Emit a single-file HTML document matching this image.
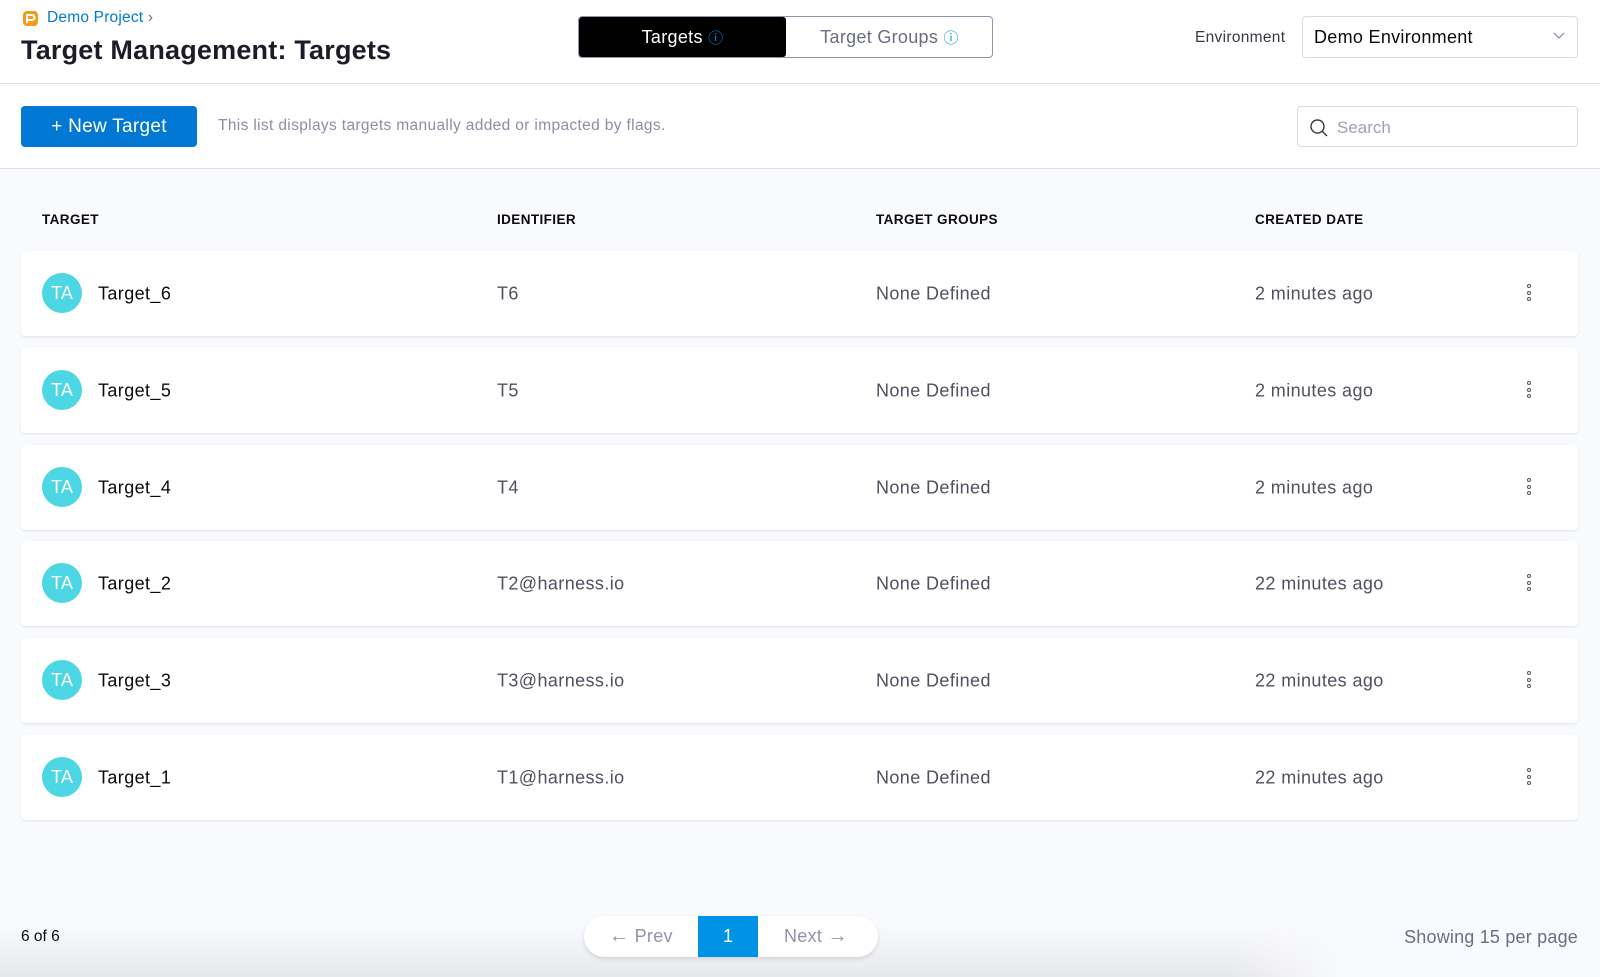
<!DOCTYPE html>
<html><head><meta charset="utf-8"><style>
*{box-sizing:border-box;margin:0;padding:0}
body{width:1600px;height:977px;overflow:hidden;font-family:"Liberation Sans",sans-serif;background:#f9fafe;position:relative;color:#0b0b0d}
.hdr{position:absolute;left:0;top:0;width:1600px;height:84px;background:#fff;border-bottom:1px solid #dcdce6}
.tb{position:absolute;left:0;top:84px;width:1600px;height:85px;background:#fff;border-bottom:1px solid #dcdce6}
.abs{position:absolute}
.row{position:absolute;left:21px;width:1557px;height:85px;background:#fff;border-radius:4px;box-shadow:0 1px 2px rgba(96,97,112,.16)}
.row span{position:absolute;top:50%;transform:translateY(-50%);font-size:18px;color:#4f5162;letter-spacing:.4px}
.av{position:absolute;left:21px;top:22px;width:40px;height:40px;border-radius:50%;background:#4dd6e3;color:#fff;font-size:18px;line-height:40px;text-align:center}
.dots{position:absolute;left:1506px;top:33px;width:4px}
.dots i{display:block;width:4px;height:4px;border:1.2px solid #555;border-radius:50%;margin-bottom:2.5px}
.th{position:absolute;top:212px;font-size:13.5px;font-weight:bold;letter-spacing:.4px;color:#0b0b0d}
</style></head><body>
<div class="hdr">
 <svg class="abs" style="left:22px;top:10px" width="17" height="17" viewBox="0 0 17 17"><rect x="1" y="1" width="15" height="15" rx="4" fill="#f39a1c"/><path d="M5 13V5h5a2.5 2.5 0 010 5H5" stroke="#fff" stroke-width="2" fill="none"/></svg>
 <div class="abs" style="left:47px;top:9px;font-size:15.5px;color:#0278d5;letter-spacing:.2px">Demo Project <span style="color:#6b6d85">›</span></div>
 <div class="abs" style="left:21px;top:35px;font-size:27px;font-weight:bold;color:#1c1c28;letter-spacing:.2px">Target Management: Targets</div>
 <div class="abs" style="left:578px;top:16px;width:415px;height:42px;border:1px solid #9293ab;border-radius:4px;background:#fff;overflow:hidden">
  <div class="abs" style="left:0;top:0;width:207px;height:40px;background:#000;border-radius:3px;color:#fff;font-size:18px;line-height:40px;text-align:center;letter-spacing:.3px">Targets <span style="color:#0092e4;font-size:15px">ⓘ</span></div>
  <div class="abs" style="left:207px;top:0;width:207px;height:40px;color:#6b6d85;font-size:18px;line-height:40px;text-align:center;letter-spacing:.3px">Target Groups <span style="color:#0092e4;font-size:15px">ⓘ</span></div>
 </div>
 <div class="abs" style="left:1195px;top:29px;font-size:15.5px;color:#383946;letter-spacing:.3px">Environment</div>
 <div class="abs" style="left:1302px;top:16px;width:276px;height:42px;border:1px solid #d9dae5;border-radius:4px;background:#fff">
  <div class="abs" style="left:11px;top:10px;font-size:18px;color:#0b0b0d;letter-spacing:.3px">Demo Environment</div>
  <svg class="abs" style="left:250px;top:15px" width="12" height="8"><path d="M1 1l5 5 5-5" stroke="#9293ab" fill="none" stroke-width="1.3"/></svg>
 </div>
</div>
<div class="tb">
 <div class="abs" style="left:21px;top:22px;width:176px;height:41px;background:#0278d5;border-radius:4px;color:#fff;font-size:19px;line-height:41px;text-align:center;letter-spacing:.3px">+ New Target</div>
 <div class="abs" style="left:218px;top:33px;font-size:15.5px;color:#8c8ea6;letter-spacing:.35px">This list displays targets manually added or impacted by flags.</div>
 <div class="abs" style="left:1297px;top:22px;width:281px;height:41px;border:1px solid #d9dae5;border-radius:4px;background:#fff">
  <svg class="abs" style="left:11px;top:11px" width="20" height="20"><circle cx="8.5" cy="8.5" r="6.5" stroke="#383946" stroke-width="1.4" fill="none"/><path d="M13 13l5 5" stroke="#383946" stroke-width="1.4"/></svg>
  <div class="abs" style="left:39px;top:11px;font-size:17px;color:#9ea0b6">Search</div>
 </div>
</div>
<div class="th" style="left:42px">TARGET</div>
<div class="th" style="left:497px">IDENTIFIER</div>
<div class="th" style="left:876px">TARGET GROUPS</div>
<div class="th" style="left:1255px">CREATED DATE</div>

<div class="row" style="top:251px"><div class="av">TA</div><span style="left:77px;color:#0b0b0d">Target_6</span><span style="left:476px">T6</span><span style="left:855px">None Defined</span><span style="left:1234px">2 minutes ago</span><div class="dots"><i></i><i></i><i></i></div></div>
<div class="row" style="top:348px"><div class="av">TA</div><span style="left:77px;color:#0b0b0d">Target_5</span><span style="left:476px">T5</span><span style="left:855px">None Defined</span><span style="left:1234px">2 minutes ago</span><div class="dots"><i></i><i></i><i></i></div></div>
<div class="row" style="top:445px"><div class="av">TA</div><span style="left:77px;color:#0b0b0d">Target_4</span><span style="left:476px">T4</span><span style="left:855px">None Defined</span><span style="left:1234px">2 minutes ago</span><div class="dots"><i></i><i></i><i></i></div></div>
<div class="row" style="top:541px"><div class="av">TA</div><span style="left:77px;color:#0b0b0d">Target_2</span><span style="left:476px">T2@harness.io</span><span style="left:855px">None Defined</span><span style="left:1234px">22 minutes ago</span><div class="dots"><i></i><i></i><i></i></div></div>
<div class="row" style="top:638px"><div class="av">TA</div><span style="left:77px;color:#0b0b0d">Target_3</span><span style="left:476px">T3@harness.io</span><span style="left:855px">None Defined</span><span style="left:1234px">22 minutes ago</span><div class="dots"><i></i><i></i><i></i></div></div>
<div class="row" style="top:735px"><div class="av">TA</div><span style="left:77px;color:#0b0b0d">Target_1</span><span style="left:476px">T1@harness.io</span><span style="left:855px">None Defined</span><span style="left:1234px">22 minutes ago</span><div class="dots"><i></i><i></i><i></i></div></div>

<div class="abs" style="left:0;top:925px;width:1340px;height:52px;background:linear-gradient(#f9fafe,#e7e8ec);-webkit-mask-image:linear-gradient(90deg,#000 92%,transparent);mask-image:linear-gradient(90deg,#000 92%,transparent)"></div>
<div class="abs" style="left:21px;top:928px;font-size:15.5px;color:#0b0b0d">6 of 6</div>
<div class="abs" style="left:584px;top:916px;width:294px;height:41px;background:#fff;border-radius:21px;box-shadow:0 2px 4px rgba(0,0,0,.12);overflow:hidden">
 <div class="abs" style="left:25px;top:10px;font-size:18px;color:#9293ab;letter-spacing:.3px"><span style="font-size:20px;line-height:18px">←</span> Prev</div>
 <div class="abs" style="left:114px;top:0;width:60px;height:41px;background:#0092e4;color:#fff;font-size:18px;line-height:41px;text-align:center">1</div>
 <div class="abs" style="left:200px;top:10px;font-size:18px;color:#9293ab;letter-spacing:.3px">Next <span style="font-size:20px;line-height:18px">→</span></div>
</div>
<div class="abs" style="right:22px;top:927px;font-size:18px;color:#6b6d85;letter-spacing:.2px">Showing 15 per page</div>
</body></html>
